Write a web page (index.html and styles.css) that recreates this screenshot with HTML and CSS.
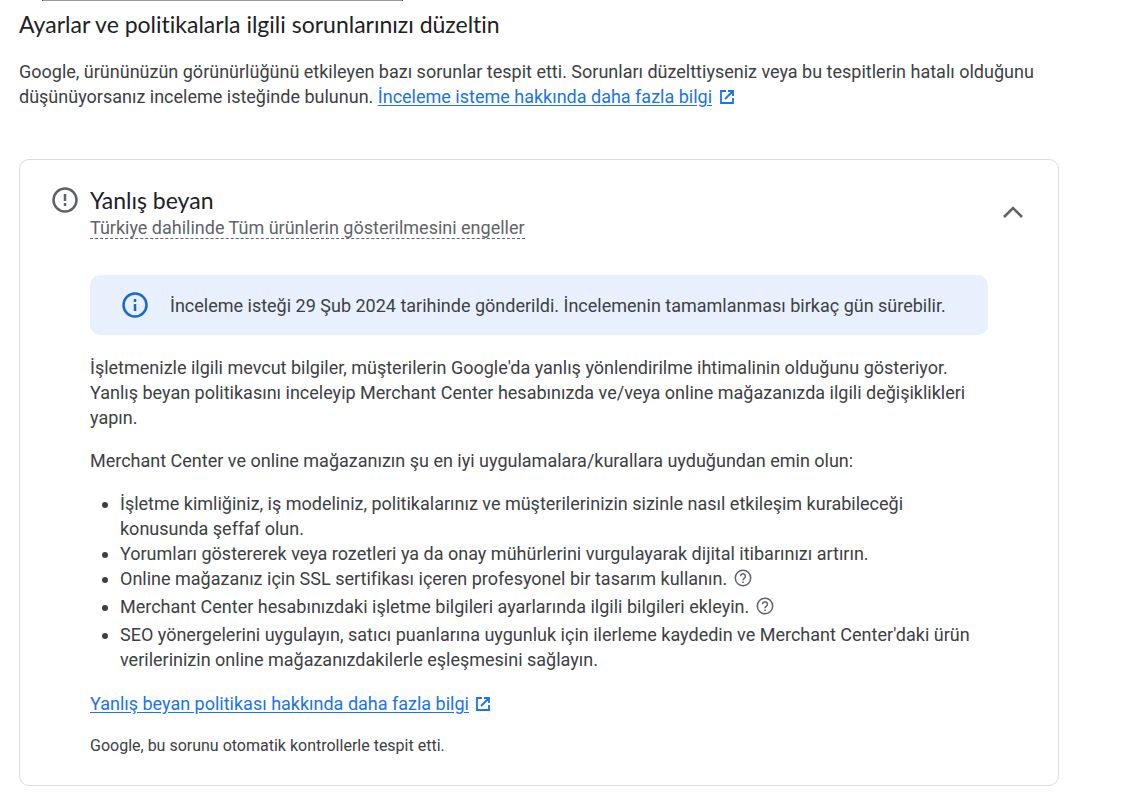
FILE: index.html
```html
<!DOCTYPE html>
<html lang="tr">
<head>
  <meta charset="UTF-8">
  <meta name="viewport" content="width=device-width, initial-scale=1">
  <title>Ayarlar ve politikalar</title>
  <link rel="stylesheet" href="styles.css">
</head>
<body>

  <div class="top-box"></div>

  <main>
    <h1>Ayarlar ve politikalarla ilgili sorunlarınızı düzeltin</h1>
    <p class="intro">
      Google, ürününüzün görünürlüğünü etkileyen bazı sorunlar tespit etti. Sorunları düzelttiyseniz veya bu tespitlerin hatalı olduğunu düşünüyorsanız inceleme isteğinde bulunun.
      <a href="#">İnceleme isteme hakkında daha fazla bilgi</a>
      <svg class="open-icon" viewBox="0 0 18 18" aria-hidden="true"><path d="M8 3H3v12h12v-5M10 3h5v5M15 3L7 11"/></svg>
    </p>

    <section class="card">
      <header class="card-header">
        <svg class="status-icon" viewBox="0 0 26 26" aria-hidden="true">
          <circle cx="13" cy="13" r="11.5"/>
          <path d="M13 7v7M13 16v3"/>
        </svg>
        <div class="card-title">
          <h2>Yanlış beyan</h2>
          <div class="impact">Türkiye dahilinde Tüm ürünlerin gösterilmesini engeller</div>
        </div>
        <button class="collapse" aria-label="Daralt" aria-expanded="true">
          <svg viewBox="0 0 22 14" aria-hidden="true"><path d="M2 12l9-9 9 9"/></svg>
        </button>
      </header>

      <div class="card-body">
        <div class="notice">
          <svg class="status-icon" viewBox="0 0 26 26" aria-hidden="true">
            <circle cx="13" cy="13" r="11.5"/>
            <path d="M13 7v3M13 12v7"/>
          </svg>
          <span>İnceleme isteği 29 Şub 2024 tarihinde gönderildi. İncelemenin tamamlanması birkaç gün sürebilir.</span>
        </div>

        <p>İşletmenizle ilgili mevcut bilgiler, müşterilerin Google'da yanlış yönlendirilme ihtimalinin olduğunu gösteriyor. Yanlış beyan politikasını inceleyip Merchant Center hesabınızda ve/veya online mağazanızda ilgili değişiklikleri yapın.</p>
        <p>Merchant Center ve online mağazanızın şu en iyi uygulamalara/kurallara uyduğundan emin olun:</p>

        <ul>
          <li>İşletme kimliğiniz, iş modeliniz, politikalarınız ve müşterilerinizin sizinle nasıl etkileşim kurabileceği konusunda şeffaf olun.</li>
          <li>Yorumları göstererek veya rozetleri ya da onay mühürlerini vurgulayarak dijital itibarınızı artırın.</li>
          <li class="with-help">Online mağazanız için SSL sertifikası içeren profesyonel bir tasarım kullanın.
            <button class="help" aria-label="Yardım"><svg viewBox="0 0 18 18" aria-hidden="true"><circle cx="9" cy="9" r="7.7"/><path d="M6.6 7.2a2.4 2.4 0 1 1 4 1.8c-.9.8-1.6 1.1-1.6 2.2M9 12.4v1.6"/></svg></button>
          </li>
          <li class="with-help">Merchant Center hesabınızdaki işletme bilgileri ayarlarında ilgili bilgileri ekleyin.
            <button class="help" aria-label="Yardım"><svg viewBox="0 0 18 18" aria-hidden="true"><circle cx="9" cy="9" r="7.7"/><path d="M6.6 7.2a2.4 2.4 0 1 1 4 1.8c-.9.8-1.6 1.1-1.6 2.2M9 12.4v1.6"/></svg></button>
          </li>
          <li>SEO yönergelerini uygulayın, satıcı puanlarına uygunluk için ilerleme kaydedin ve Merchant Center'daki ürün verilerinizin online mağazanızdakilerle eşleşmesini sağlayın.</li>
        </ul>

        <div class="more">
          <a href="#">Yanlış beyan politikası hakkında daha fazla bilgi</a>
          <svg class="open-icon" viewBox="0 0 18 18" aria-hidden="true"><path d="M8 3H3v12h12v-5M10 3h5v5M15 3L7 11"/></svg>
        </div>
        <p class="source">Google, bu sorunu otomatik kontrollerle tespit etti.</p>
      </div>
    </section>
  </main>

</body>
</html>
```
FILE: styles.css
```css
* {
  box-sizing: border-box;
}

body {
  margin: 0;
  background-color: #fff;
  color: #3c4043;
  font-family: Roboto, "Liberation Sans", sans-serif;
  font-size: 18px;
  line-height: 25px;
}

.top-box {
  width: 361px;
  height: 1px;
  margin-left: 42px;
  background-color: #999;
  border: solid #444;
  border-width: 0 1px;
}

main {
  padding: 8px 76px 19px 19px;
}

h1,
h2 {
  margin: 0;
  color: #202124;
  font-family: Lato, Roboto, sans-serif;
  font-size: 23px;
  font-weight: 400;
  font-variant-ligatures: none;
  line-height: 30px;
}

p {
  margin: 0 0 18px;
}

a {
  color: #1a73e8;
  text-underline-offset: 2px;
}

svg {
  fill: none;
  stroke: currentColor;
  stroke-width: 1.8;
}

.intro {
  margin: 20px 0 50px;
}

.open-icon {
  width: 18px;
  height: 18px;
  margin-left: 1px;
  color: #1a73e8;
  vertical-align: -3px;
}

.card {
  padding: 25px 32px 27px;
  border: 1px solid #dadce0;
  border-radius: 10px;
}

.card-header {
  display: flex;
  align-items: flex-start;
}

.status-icon {
  flex: none;
  width: 26px;
  height: 26px;
  stroke-width: 2.5;
}

.card-header .status-icon {
  margin: 2px 12px 0 0;
  color: #5f6368;
}

.card-title {
  flex: 1;
}

.impact {
  width: fit-content;
  padding-top: 2px;
  color: #5f6368;
  line-height: 21px;
  border-bottom: 1px dashed #5f6368;
}

.collapse {
  display: flex;
  align-self: center;
  padding: 2px;
  border: none;
  background: none;
  color: #5f6368;
  cursor: pointer;
}

.collapse svg {
  width: 22px;
  height: 14px;
  stroke-width: 2.6;
}

.card-body {
  padding: 36px 38px 0;
}

.notice {
  display: flex;
  align-items: center;
  gap: 22px;
  min-height: 60px;
  margin-bottom: 20px;
  padding: 0 32px;
  background-color: #e8f0fe;
  border-radius: 10px;
}

.notice .status-icon {
  color: #1967d2;
}

ul {
  margin: 0 0 19px;
  padding-left: 30px;
}

.with-help {
  padding-bottom: 3px;
}

.help {
  height: 18px;
  margin-left: 2px;
  padding: 0;
  border: none;
  background: none;
  color: #5f6368;
  vertical-align: -2px;
  cursor: pointer;
}

.help svg {
  display: block;
  width: 18px;
  height: 18px;
  stroke-width: 1.5;
}

.more {
  margin-bottom: 17px;
}

.source {
  margin: 0;
  font-size: 16px;
}
```
